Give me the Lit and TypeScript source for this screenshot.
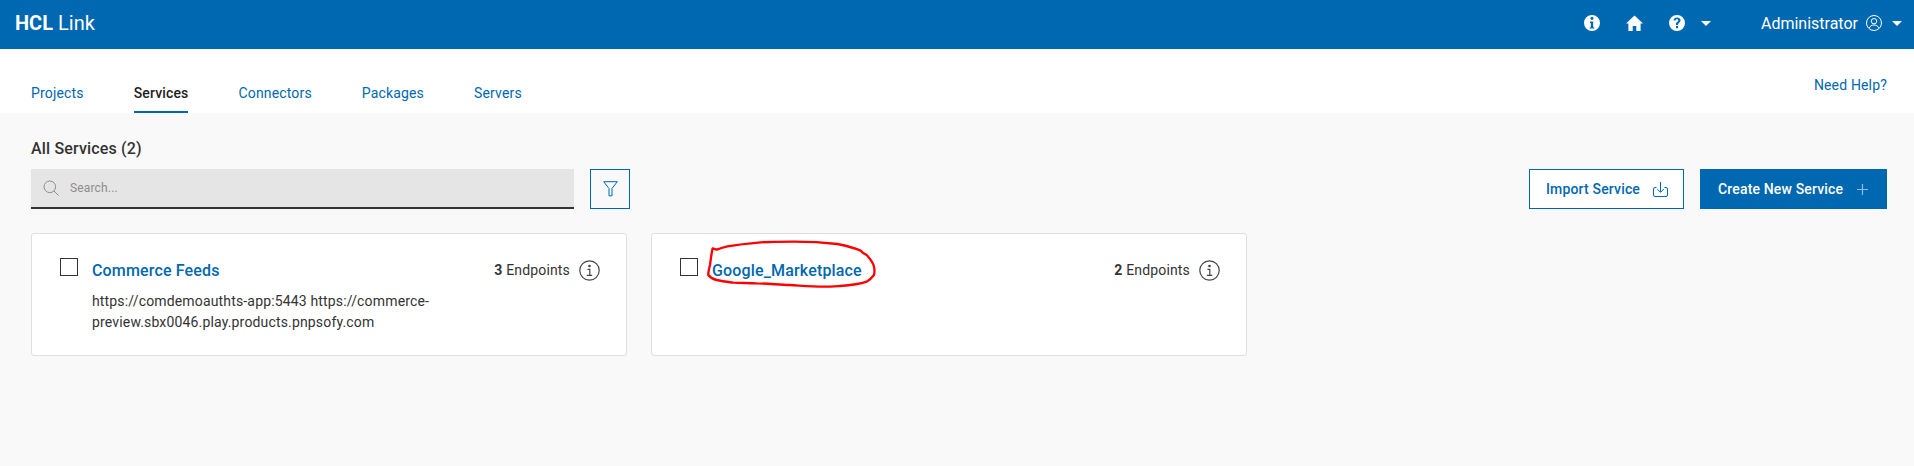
import { LitElement, html, css, svg } from "lit";
import { customElement } from "lit/decorators.js";

const tabs = ["Projects", "Services", "Connectors", "Packages", "Servers"];

const services = [
  {
    name: "Commerce Feeds",
    count: 3,
    desc: "https://comdemoauthts-app:5443 https://commerce-preview.sbx0046.play.products.pnpsofy.com",
    marked: false,
  },
  { name: "Google_Marketplace", count: 2, desc: "", marked: true },
];

const caret = html`<svg class="caret" width="10" height="5" viewBox="0 0 10 5"><path d="M0 0h10L5 5z" fill="#fff" /></svg>`;

const infoFilled = svg`<path fill="#fff" fill-rule="evenodd" d="M8 0a8 8 0 1 0 0 16A8 8 0 0 0 8 0zM6.4 3.3a1.6 1.6 0 1 1 3.2 0 1.6 1.6 0 0 1-3.2 0zM6 6.6h3.2v5.6h1v1.4H5.800v-1.400h1v-4.200H6z"/>`;
const helpFilled = svg`<path fill="#fff" fill-rule="evenodd" d="M8 0a8 8 0 1 0 0 16A8 8 0 0 0 8 0zM7 10h2v-.6c0-.7.3-1 1-1.500.9-.6 1.500-1.400 1.500-2.600C11.500 3.500 10 2.500 8 2.500c-1.900 0-3.300 1-3.500 3h2c.1-.8.600-1.200 1.400-1.200.8 0 1.400.4 1.400 1.100 0 .6-.3.900-.9 1.300C7.400 7.300 7 7.900 7 9zm0 1h2v2.200H7z"/>`;

@customElement("app-root")
export class AppRoot extends LitElement {
  static styles = css`
    :host {
      display: block;
      height: 466px;
      background: #f9f9f9;
      font-family: Roboto, "Liberation Sans", sans-serif;
      font-size: 14px;
      letter-spacing: 0.16px;
      color: #333;
      overflow: hidden;
    }
    svg {
      display: block;
      flex: none;
    }
    .topbar {
      height: 49px;
      background: #0067b1;
      color: #fff;
      display: flex;
      align-items: center;
      padding: 0 12px 3px 15px;
      box-sizing: border-box;
      letter-spacing: 0;
    }
    .logo {
      font-size: 20px;
    }
    .logo b {
      font-weight: 700;
    }
    .top-icons {
      margin-left: auto;
      display: flex;
      align-items: center;
      gap: 26px;
    }
    .top-icons .caret {
      margin-left: -10px;
    }
    .user {
      margin-left: 50px;
      display: flex;
      align-items: center;
      font-size: 16px;
    }
    .user .avatar {
      margin: 0 10px 0 8px;
    }
    .tabbar {
      height: 64px;
      background: #fff;
      display: flex;
      padding: 0 27px 0 31px;
      box-sizing: border-box;
    }
    .tabs {
      display: flex;
      gap: 50px;
      align-self: flex-end;
    }
    .tab {
      height: 36px;
      padding-top: 6px;
      box-sizing: border-box;
      color: #0067b1;
      font-size: 14px;
      line-height: 21px;
    }
    .tab.active {
      color: #222;
      font-weight: 500;
      border-bottom: 2px solid #0067b1;
    }
    .help {
      margin-left: auto;
      margin-top: 26px;
      color: #0067b1;
      line-height: 21px;
    }
    .content {
      padding: 25px 27px 0 31px;
    }
    h2 {
      margin: 0 0 10px;
      font-size: 16px;
      font-weight: 500;
      line-height: 21px;
      color: #333;
    }
    .toolbar {
      display: flex;
      align-items: stretch;
      height: 40px;
    }
    .search {
      width: 543px;
      display: flex;
      align-items: center;
      gap: 11px;
      padding-left: 12px;
      box-sizing: border-box;
      background: #e5e5e5;
      border-bottom: 2px solid #333;
      color: #8d8d8d;
      font-size: 12px;
    }
    .filter {
      width: 40px;
      margin-left: 16px;
      box-sizing: border-box;
      border: 1px solid #0067b1;
      display: flex;
      align-items: center;
      justify-content: center;
    }
    .actions {
      margin-left: auto;
      display: flex;
      gap: 16px;
    }
    .btn {
      display: flex;
      align-items: center;
      box-sizing: border-box;
      font-size: 14px;
      font-weight: 500;
    }
    .btn.import {
      width: 155px;
      padding-left: 16px;
      gap: 13px;
      border: 1px solid #0067b1;
      background: #fff;
      color: #0067b1;
    }
    .btn.create {
      width: 187px;
      padding-left: 18px;
      gap: 14px;
      background: #0067b1;
      color: #fff;
    }
    .cards {
      display: flex;
      gap: 24px;
      margin-top: 24px;
    }
    .card {
      position: relative;
      width: 596px;
      height: 123px;
      box-sizing: border-box;
      padding: 24px 26px 0 28px;
      background: #fff;
      border: 1px solid #dfdfdf;
      border-radius: 3px;
      display: flex;
      gap: 14px;
    }
    .check {
      width: 18px;
      height: 18px;
      flex: none;
      box-sizing: border-box;
      border: 1px solid #333;
    }
    .body {
      flex: 1;
      min-width: 0;
    }
    .head {
      display: flex;
      align-items: center;
      height: 24px;
    }
    .title {
      color: #0067b1;
      font-size: 16px;
      font-weight: 500;
    }
    .count {
      margin-left: auto;
      margin-right: 9px;
    }
    .count b {
      font-weight: 700;
    }
    .desc {
      width: 365px;
      margin-top: 9px;
      line-height: 21px;
    }
    .scribble {
      position: absolute;
      left: 38px;
      top: -4px;
    }
  `;

  render() {
    return html`
      <div class="topbar">
        <div class="logo"><b>HCL</b> Link</div>
        <div class="top-icons">
          <svg width="16" height="16" viewBox="0 0 16 16">${infoFilled}</svg>
          <svg width="17" height="16" viewBox="0 0 17 16"><path fill="#fff" d="M8.500.6 0 8.400h2.400V16h4.300v-5h3.600v5h4.300V8.400H17z" /></svg>
          <svg width="16" height="16" viewBox="0 0 16 16">${helpFilled}</svg>
          ${caret}
        </div>
        <div class="user">
          Administrator
          <svg class="avatar" width="16" height="16" viewBox="0 0 16 16" fill="none" stroke="#fff" stroke-width="1">
            <circle cx="8" cy="8" r="7.500" />
            <circle cx="8" cy="6.200" r="2.700" />
            <path d="M3.300 13c.8-2 2.400-3 4.700-3s3.900 1 4.700 3" />
          </svg>
          ${caret}
        </div>
      </div>

      <div class="tabbar">
        <div class="tabs">
          ${tabs.map((t) => html`<div class="tab ${t === "Services" ? "active" : ""}">${t}</div>`)}
        </div>
        <div class="help">Need Help?</div>
      </div>

      <div class="content">
        <h2>All Services (2)</h2>
        <div class="toolbar">
          <div class="search">
            <svg width="16" height="16" viewBox="0 0 16 16" fill="none" stroke="#8d8d8d" stroke-width="1">
              <circle cx="6.800" cy="6.800" r="5.800" />
              <path d="m11 11 4.500 4.500" />
            </svg>
            Search...
          </div>
          <div class="filter">
            <svg width="15" height="16" viewBox="0 0 15 16" fill="none" stroke="#0067b1" stroke-width="1">
              <path d="M.7.700h13.600L9 7.500v7.300H6V7.500z" />
            </svg>
          </div>
          <div class="actions">
            <div class="btn import">
              Import Service
              <svg width="15" height="15" viewBox="0 0 15 15" fill="none" stroke="#0067b1" stroke-width="1">
                <path d="M7.500 0v10M4.200 7l3.300 3.300L10.800 7" />
                <path d="M3.500 5.500H2A1.500 1.500 0 0 0 .5 7v6A1.500 1.500 0 0 0 2 14.500h11a1.500 1.500 0 0 0 1.500-1.500V7A1.500 1.500 0 0 0 13 5.500h-1.500" />
              </svg>
            </div>
            <div class="btn create">
              Create New Service
              <svg width="11" height="11" viewBox="0 0 11 11" stroke="#8fbbdc" stroke-width="1.200"><path d="M5.500 0v11M0 5.500h11" /></svg>
            </div>
          </div>
        </div>

        <div class="cards">
          ${services.map(
            (s) => html`
              <div class="card">
                <div class="check"></div>
                <div class="body">
                  <div class="head">
                    <span class="title">${s.name}</span>
                    <span class="count"><b>${s.count}</b> Endpoints</span>
                    <svg width="21" height="21" viewBox="0 0 21 21" fill="none" stroke="#444" stroke-width="1.200">
                      <circle cx="10.500" cy="10.500" r="9.700" />
                      <circle cx="10.500" cy="6" r=".7" fill="#444" />
                      <path d="M8.500 9.300h2.300v6M7.800 15.400h5.400" />
                    </svg>
                  </div>
                  ${s.desc ? html`<div class="desc">${s.desc}</div>` : ""}
                </div>
                ${s.marked
                  ? html`<svg class="scribble" width="200" height="70" viewBox="0 0 600 210" fill="none" stroke="#f00" stroke-width="7" stroke-linejoin="round">
                      <path d="M68 55C64 72 62 90 60 105c-3 12-6 22-5 30 7 9 15 13 25 15 16 4 34 6 50 8 26 1 50 1 70 2 36 1 68 4 100 5 34 2 66 5 100 5 20 0 34-1 50-2 28-2 60-6 80-13 8-5 16-12 22-20 2-8 2-16 0-25-3-14-14-26-22-35-8-4-12-6-18-13-20-9-40-14-70-20-44-5-90-7-130-7-35 0-70 0-100 2-34 3-70 7-100 12-12 3-22 6-32 10z" />
                    </svg>`
                  : ""}
              </div>
            `
          )}
        </div>
      </div>
    `;
  }
}
